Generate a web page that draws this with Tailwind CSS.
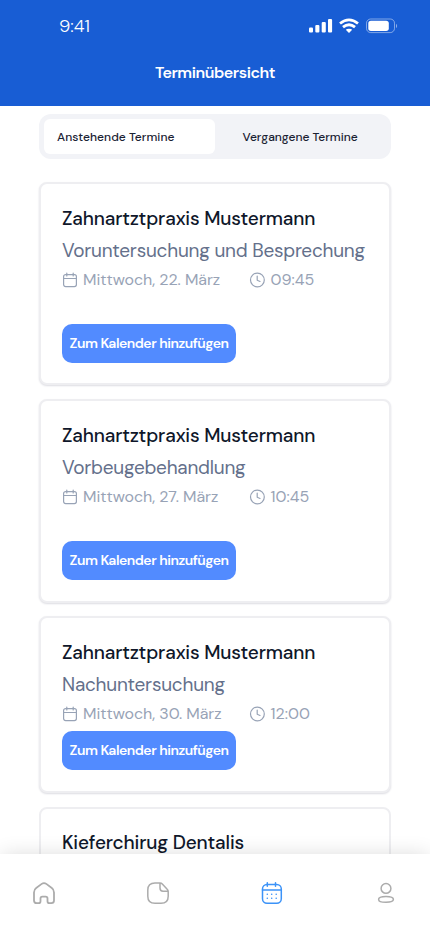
<!DOCTYPE html>
<html lang="de"><head><meta charset="utf-8"><meta name="viewport" content="width=device-width,initial-scale=1"><title>Terminübersicht</title>
<script src="https://cdn.jsdelivr.net/npm/@tailwindcss/browser@4"></script></head>
<body class="bg-white font-['DM_Sans','Inter','Liberation_Sans',sans-serif]">
<svg class="hidden">
<symbol id="cal" viewBox="0 0 16 16"><g fill="none" stroke="currentColor" stroke-width="1.2" stroke-linecap="round" stroke-linejoin="round"><rect x="1.6" y="2.6" width="12.8" height="12" rx="2"/><path d="M1.6 6.5h12.8M4.8 1v3M11.2 1v3"/></g></symbol>
<symbol id="clock" viewBox="0 0 16 16"><g fill="none" stroke="currentColor" stroke-width="1.2" stroke-linecap="round" stroke-linejoin="round"><circle cx="8.4" cy="8" r="6.9"/><path d="M8.200 4v4.300l2.800 1.2"/></g></symbol>
</svg>
<div class="flex h-[932px] w-[430px] flex-col overflow-hidden bg-white">
<header class="h-[106px] shrink-0 bg-[#185dd4] text-white">
<div class="flex h-[52px] items-center justify-between pl-[59px] pr-[31px]">
<span class="text-[18px] font-light">9:41</span>
<svg class="h-4 w-[90px]" viewBox="0 0 90 16" fill="none">
<g fill="#fff"><rect x="0" y="9.6" width="4" height="5" rx="1.1"/><rect x="6.3" y="7" width="4.1" height="7.6" rx="1.1"/><rect x="12.7" y="4" width="4.1" height="10.6" rx="1.1"/><rect x="19" y="1" width="4.1" height="13.6" rx="1.1"/><path d="M40 10.800 Q42.300 10.800 43.200 11.800 L40 15 L36.800 11.800 Q37.700 10.800 40 10.800Z"/></g>
<path d="M31 5.500Q40 -1.800 49 5.500M34 9.200Q40 4.200 46 9.200" stroke="#fff" stroke-width="2.800"/>
<rect x="57.500" y="1" width="28" height="13.600" rx="4.200" stroke="#fff" stroke-opacity=".45"/><rect x="59.300" y="2.700" width="20.500" height="10.300" rx="2.700" fill="#fff"/><path d="M87 5.700c1.500.7 1.500 3.700 0 4.400z" fill="#fff" fill-opacity=".5"/>
</svg>
</div>
<h1 class="text-center text-[16px] font-semibold leading-[42px] tracking-[-0.45px]">Terminübersicht</h1>
</header>
<main class="flex min-h-0 flex-1 flex-col overflow-hidden px-[39px] pt-2">
<div class="flex h-[45px] w-[352px] shrink-0 rounded-xl bg-[#f2f3f7] p-[5px] text-[12px] font-medium leading-[36px] text-[#1a2233]">
<button class="w-[171px] rounded-md bg-white pl-[13px] text-left tracking-[0.05px]">Anstehende Termine</button>
<button class="pl-[27.500px]">Vergangene Termine</button>
</div>
<div class="mt-[23px] flex flex-col gap-[14px]">
<article class="flex h-[203.250px] shrink-0 flex-col items-start rounded-lg border-2 border-[#eeeef1] bg-white px-[21px] pt-[21px] shadow-[0_1px_2px_#dcdce2]">
<h2 class="text-[19px] font-medium leading-[27px] tracking-[-0.15px] text-[#0f172a]">Zahnartztpraxis Mustermann</h2>
<p class="mt-[5px] whitespace-nowrap text-[19px] leading-[27px] tracking-[-0.24px] text-[#64708b]">Voruntersuchung und Besprechung</p>
<div class="mt-1 flex h-6 items-center text-[16px] text-[#98a3b6]"><svg class="size-4"><use href="#cal"/></svg><span class="ml-[5px] w-[166px] tracking-[-0.05px]">Mittwoch, 22. März</span><svg class="size-4"><use href="#clock"/></svg><span class="ml-[5.500px]">09:45</span></div>
<button class="mt-[31.500px] h-[39px] w-[174px] rounded-[10px] bg-[#528bff] text-[14px] font-semibold tracking-[-0.47px] text-white">Zum Kalender hinzufügen</button>
</article>
<article class="flex h-[203.250px] shrink-0 flex-col items-start rounded-lg border-2 border-[#eeeef1] bg-white px-[21px] pt-[21px] shadow-[0_1px_2px_#dcdce2]">
<h2 class="text-[19px] font-medium leading-[27px] tracking-[-0.15px] text-[#0f172a]">Zahnartztpraxis Mustermann</h2>
<p class="mt-[5px] text-[19px] leading-[27px] tracking-[-0.24px] text-[#64708b]">Vorbeugebehandlung</p>
<div class="mt-1 flex h-6 items-center text-[16px] text-[#98a3b6]"><svg class="size-4"><use href="#cal"/></svg><span class="ml-[5px] w-[166px] tracking-[-0.05px]">Mittwoch, 27. März</span><svg class="size-4"><use href="#clock"/></svg><span class="ml-[5.500px]">10:45</span></div>
<button class="mt-[31.500px] h-[39px] w-[174px] rounded-[10px] bg-[#528bff] text-[14px] font-semibold tracking-[-0.47px] text-white">Zum Kalender hinzufügen</button>
</article>
<article class="-mt-[0.500px] flex h-[176.500px] shrink-0 flex-col items-start rounded-lg border-2 border-[#eeeef1] bg-white px-[21px] pt-[20.500px] shadow-[0_1px_2px_#dcdce2]">
<h2 class="text-[19px] font-medium leading-[27px] tracking-[-0.15px] text-[#0f172a]">Zahnartztpraxis Mustermann</h2>
<p class="mt-[5px] text-[19px] leading-[27px] tracking-[-0.24px] text-[#64708b]">Nachuntersuchung</p>
<div class="mt-1 flex h-6 items-center text-[16px] text-[#98a3b6]"><svg class="size-4"><use href="#cal"/></svg><span class="ml-[5px] w-[166px] tracking-[-0.05px]">Mittwoch, 30. März</span><svg class="size-4"><use href="#clock"/></svg><span class="ml-[5.500px]">12:00</span></div>
<button class="mt-[5.250px] h-[39px] w-[174px] rounded-[10px] bg-[#528bff] pt-px text-[14px] font-semibold tracking-[-0.47px] text-white">Zum Kalender hinzufügen</button>
</article>
<article class="h-[203px] shrink-0 rounded-lg border-2 border-[#eeeef1] bg-white px-[21px] pt-[20.500px]">
<h2 class="text-[19px] font-medium leading-[27px] tracking-[-0.15px] text-[#0f172a]">Kieferchirug Dentalis</h2>
</article>
</div>
</main>
<nav class="relative flex h-[78px] shrink-0 justify-between bg-white px-8 pt-[27px] text-[#acacac] shadow-[0_0_20px_-2px_rgba(0,0,0,0.16)]">
<svg class="size-6" viewBox="0 0 24 24" fill="none" stroke="currentColor" stroke-width="1.8" stroke-linejoin="round"><path d="M2 11.500Q2 8.600 4.200 7L9.700 2.900Q12 1.200 14.300 2.900L19.800 7Q22 8.600 22 11.500V19.500Q22 22.200 19.300 22.200H17.500Q15.500 22.200 15.500 20.200V17.500Q15.500 15.700 13.700 15.700H10.300Q8.500 15.700 8.500 17.500V20.200Q8.500 22.200 6.500 22.200H4.700Q2 22.200 2 19.500Z"/></svg>
<svg class="size-6" viewBox="0 0 24 24" fill="none" stroke="currentColor" stroke-width="1.500" stroke-linejoin="round"><path d="M14 1.900H9Q1.800 1.900 1.800 9V15.200Q1.800 22.300 9 22.300H15Q22.200 22.300 22.200 15.200V10.600Q22.200 9.300 21.200 8.300L16.300 2.900Q15.400 1.900 14 1.900ZM14 2V7Q14 10.200 17 10.200H22"/></svg>
<svg class="size-6 text-[#3c93f8]" viewBox="0 0 24 24" fill="none" stroke="currentColor" stroke-width="1.500" stroke-linecap="round"><rect x="2.500" y="3.400" width="18.800" height="18.900" rx="4.500"/><path d="M2.500 9h18.800M7.300 1.700v3.500M15.500 1.700v3.500"/><path stroke-width="1.600" d="M7.300 13.200h.01M11.700 13.200h.01M16.200 13.200h.01M7.300 17.200h.01M11.700 17.200h.01M16.200 17.200h.01"/></svg>
<svg class="size-6" viewBox="0 0 24 24" fill="none" stroke="currentColor" stroke-width="1.500"><circle cx="12" cy="7.400" r="4.900"/><path d="M4.600 18.300C4.600 16 6.500 15.400 12 15.400S19.400 16 19.400 18.300 17.500 21.300 12 21.300 4.600 20.600 4.600 18.300Z"/></svg>
</nav>
</div>
</body></html>
